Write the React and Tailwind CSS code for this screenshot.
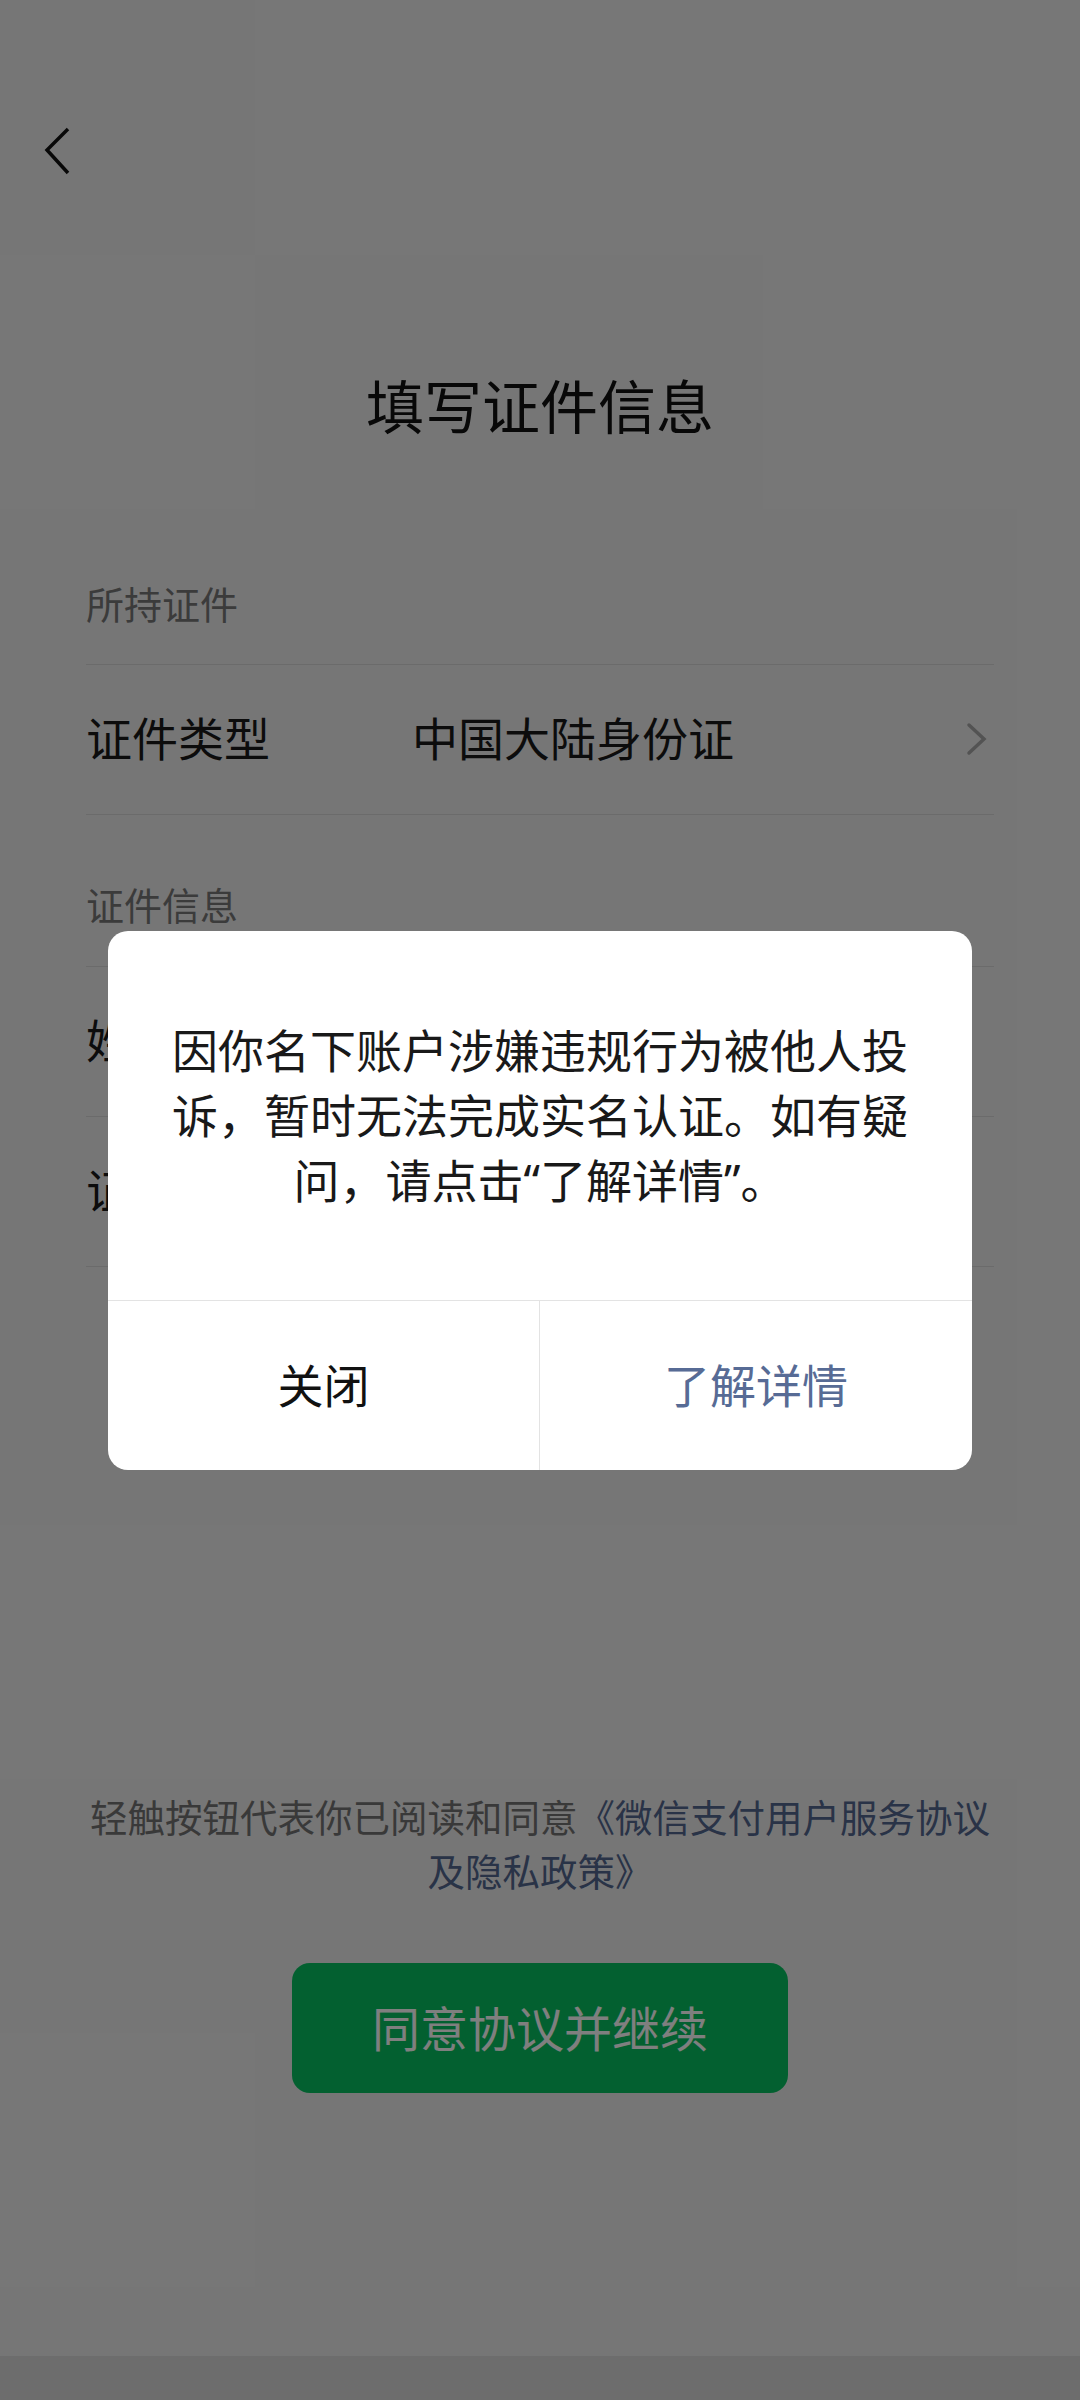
import React from 'react';

function BackIcon() {
  return (
    <svg width="30" height="50" viewBox="0 0 30 50" fill="none">
      <path d="M25 3 L4 24 L25 47" stroke="#111" strokeWidth="3.5" strokeLinejoin="miter" />
    </svg>
  );
}

function ArrowRight() {
  return (
    <svg width="22" height="36" viewBox="0 0 22 36" fill="none">
      <path d="M3 4 L18 18 L3 32" stroke="#a6a6a6" strokeWidth="3.5" strokeLinecap="round" />
    </svg>
  );
}

function FormRow({ label, value, arrow }) {
  return (
    <div className="flex h-[150px] items-center border-t border-[#d6d6d6] pb-[6px]">
      <span className="w-[326px] text-[46px] text-[#191919]">{label}</span>
      {value && <span className="text-[46px] text-[#191919]">{value}</span>}
      {arrow && (
        <span className="ml-auto mr-[6px] flex pt-[4px]">
          <ArrowRight />
        </span>
      )}
    </div>
  );
}

// curly quotes come from the Latin face so they stay narrow
function Quote({ children }) {
  return <span className="font-['Noto_Sans',sans-serif]">{children}</span>;
}

function NoticeDialog() {
  return (
    <div className="w-[864px] overflow-hidden rounded-[20px] bg-white">
      <div className="px-[40px] pt-[85px] pb-[87px] text-center text-[46px] leading-[65px] text-[#191919]">
        <p className="whitespace-nowrap">因你名下账户涉嫌违规行为被他人投</p>
        <p className="whitespace-nowrap">诉，暂时无法完成实名认证。如有疑</p>
        <p className="whitespace-nowrap">
          问，请点击<Quote>“</Quote>了解详情<Quote>”</Quote>。
        </p>
      </div>
      <div className="grid h-[170px] grid-cols-2 border-t border-[#e3e3e3]">
        <button className="flex items-center justify-center border-r border-[#e3e3e3] pb-[4px] text-[46px] text-[#111]">
          关闭
        </button>
        <button className="flex items-center justify-center pb-[4px] text-[46px] text-[#576b95]">
          了解详情
        </button>
      </div>
    </div>
  );
}

export default function App() {
  return (
    <div className="relative flex h-[2400px] w-[1080px] flex-col overflow-hidden bg-[#ededed] font-['Noto_Sans_CJK_SC',sans-serif]">
      <div className="pl-[43px] pt-[126px]">
        <BackIcon />
      </div>

      <h1 className="mt-[188px] text-center text-[58px] leading-[80px] text-[#111]">
        填写证件信息
      </h1>

      <div className="px-[86px]">
        <div className="mt-[132px] pb-[4px] text-[38px] leading-[54px] text-[#777]">所持证件</div>
        <div className="mt-[30px] border-b border-[#d6d6d6]">
          <FormRow label="证件类型" value="中国大陆身份证" arrow />
        </div>

        <div className="mt-[62px] pb-[4px] text-[38px] leading-[54px] text-[#777]">证件信息</div>
        <div className="mt-[31px] border-b border-[#d6d6d6]">
          <FormRow label="姓名" />
          <FormRow label="证件号" />
        </div>
      </div>

      <div className="mt-[522px] text-center text-[37.5px] leading-[54px]">
        <p className="whitespace-nowrap">
          <span className="text-[#737373]">轻触按钮代表你已阅读和同意</span>
          <span className="text-[#53668f]">《微信支付用户服务协议</span>
        </p>
        <p className="whitespace-nowrap text-[#53668f]">及隐私政策》</p>
      </div>

      <button className="mx-auto mt-[66px] flex h-[130px] w-[496px] items-center justify-center rounded-[18px] bg-[#07c160] pb-[4px] text-[48px] text-white">
        同意协议并继续
      </button>

      <div className="mt-auto h-[44px] bg-[#dadada]" />

      <div className="absolute inset-0 flex items-center justify-center bg-black/50">
        <NoticeDialog />
      </div>
    </div>
  );
}
